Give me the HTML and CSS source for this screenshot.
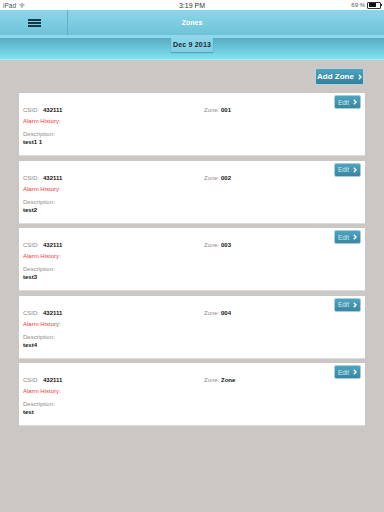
FILE: index.html
```html
<!DOCTYPE html>
<html lang="en">

<head>
    <meta charset="UTF-8">
    <meta name="viewport" content="width=device-width, initial-scale=1">
    <title>Zones</title>
    <link rel="stylesheet" href="styles.css">
</head>

<body>
    <div id="status">
        <div class="status-left">
            <span>iPad</span>
            <svg class="wifi" viewBox="0 0 8 6" width="6" height="5">
                <path d="M0.5 2.2 A5 5 0 0 1 7.5 2.2" fill="none" stroke="#666" stroke-width="0.9"></path>
                <path d="M1.8 3.5 A3.2 3.2 0 0 1 6.2 3.5" fill="none" stroke="#666" stroke-width="0.9"></path>
                <circle cx="4" cy="5" r="0.9" fill="#666"></circle>
            </svg>
        </div>
        <div class="status-time">3:19 PM</div>
        <div class="status-right">
            <span>69 %</span>
            <span class="battery"><span class="battery-level"></span></span>
        </div>
    </div>

    <header id="nav">
        <div class="nav-menu">
            <svg viewBox="0 0 13 8" width="13" height="8">
                <rect x="0" y="0" width="13" height="2" fill="#1d3549"></rect>
                <rect x="0" y="3" width="13" height="2" fill="#1d3549"></rect>
                <rect x="0" y="6" width="13" height="2" fill="#1d3549"></rect>
            </svg>
        </div>
        <div class="nav-title">Zones</div>
        <div></div>
    </header>

    <div id="datebar">
        <div class="date-pill">Dec 9 2013</div>
    </div>

    <main>
        <div class="toolbar">
            <a class="btn btn-add">Add Zone
                <svg viewBox="0 0 4 6" width="4" height="6"><polyline points="0.8,0.8 3,3 0.8,5.2" fill="none" stroke="#fff" stroke-width="1.4"></polyline></svg>
            </a>
        </div>

        <div class="zones">
            <div class="card">
                <div class="card-actions">
                    <a class="btn btn-edit">Edit
                        <svg viewBox="0 0 4 6" width="4" height="6"><polyline points="0.8,0.8 3,3 0.8,5.2" fill="none" stroke="#fff" stroke-width="1.4"></polyline></svg>
                    </a>
                </div>
                <div class="card-main">
                    <div class="field-csid"><span class="label">CSID:</span><span class="value gap">432111</span></div>
                    <div><span class="label">Zone:</span> <span class="value">001</span></div>
                </div>
                <div class="alarm">Alarm History:</div>
                <div class="label desc">Description:</div>
                <div class="value">test1 1</div>
            </div>

            <div class="card">
                <div class="card-actions">
                    <a class="btn btn-edit">Edit
                        <svg viewBox="0 0 4 6" width="4" height="6"><polyline points="0.8,0.8 3,3 0.8,5.2" fill="none" stroke="#fff" stroke-width="1.4"></polyline></svg>
                    </a>
                </div>
                <div class="card-main">
                    <div class="field-csid"><span class="label">CSID:</span><span class="value gap">432111</span></div>
                    <div><span class="label">Zone:</span> <span class="value">002</span></div>
                </div>
                <div class="alarm">Alarm History:</div>
                <div class="label desc">Description:</div>
                <div class="value">test2</div>
            </div>

            <div class="card">
                <div class="card-actions">
                    <a class="btn btn-edit">Edit
                        <svg viewBox="0 0 4 6" width="4" height="6"><polyline points="0.8,0.8 3,3 0.8,5.2" fill="none" stroke="#fff" stroke-width="1.4"></polyline></svg>
                    </a>
                </div>
                <div class="card-main">
                    <div class="field-csid"><span class="label">CSID:</span><span class="value gap">432111</span></div>
                    <div><span class="label">Zone:</span> <span class="value">003</span></div>
                </div>
                <div class="alarm">Alarm History:</div>
                <div class="label desc">Description:</div>
                <div class="value">test3</div>
            </div>

            <div class="card">
                <div class="card-actions">
                    <a class="btn btn-edit">Edit
                        <svg viewBox="0 0 4 6" width="4" height="6"><polyline points="0.8,0.8 3,3 0.8,5.2" fill="none" stroke="#fff" stroke-width="1.4"></polyline></svg>
                    </a>
                </div>
                <div class="card-main">
                    <div class="field-csid"><span class="label">CSID:</span><span class="value gap">432111</span></div>
                    <div><span class="label">Zone:</span> <span class="value">004</span></div>
                </div>
                <div class="alarm">Alarm History:</div>
                <div class="label desc">Description:</div>
                <div class="value">test4</div>
            </div>

            <div class="card">
                <div class="card-actions">
                    <a class="btn btn-edit">Edit
                        <svg viewBox="0 0 4 6" width="4" height="6"><polyline points="0.8,0.8 3,3 0.8,5.2" fill="none" stroke="#fff" stroke-width="1.4"></polyline></svg>
                    </a>
                </div>
                <div class="card-main">
                    <div class="field-csid"><span class="label">CSID:</span><span class="value gap">432111</span></div>
                    <div><span class="label">Zone:</span> <span class="value">Zone</span></div>
                </div>
                <div class="alarm">Alarm History:</div>
                <div class="label desc">Description:</div>
                <div class="value">test</div>
            </div>
        </div>
    </main>
</body>

</html>
```

FILE: styles.css
```css
html,
body {
    margin: 0;
    padding: 0;
    font-family: "Liberation Sans", Arial, sans-serif;
    background-color: #cbc7c5;
    height: 100%;
}

#status {
    height: 10px;
    background-color: #fff;
    display: grid;
    grid-template-columns: 1fr auto 1fr;
    align-items: center;
    font-size: 6.5px;
    color: #555;
    padding: 0 3px;
}

.status-left {
    display: flex;
    align-items: center;
    gap: 3px;
}

.status-time {
    font-size: 7px;
    color: #333;
}

.status-right {
    display: flex;
    align-items: center;
    justify-content: flex-end;
    gap: 2px;
    font-size: 6px;
}

.battery {
    width: 11px;
    height: 4px;
    border: 0.8px solid #333;
    border-radius: 1px;
    position: relative;
    display: flex;
    padding: 0.5px;
}

.battery::after {
    content: "";
    position: absolute;
    right: -2px;
    top: 1px;
    width: 1px;
    height: 2px;
    background: #333;
}

.battery-level {
    width: 70%;
    background-color: #111;
}

#nav {
    height: 25px;
    display: grid;
    grid-template-columns: 68px 1fr 68px;
    background: linear-gradient(#8ad7ea, #6fc2d8);
}

.nav-menu {
    display: flex;
    align-items: center;
    justify-content: center;
    border-right: 1px solid #6aacbf;
    padding-left: 2px;
}

.nav-title {
    display: flex;
    align-items: center;
    justify-content: center;
    color: #fff;
    font-weight: bold;
    font-size: 7px;
}

#datebar {
    height: 21px;
    border-top: 3px solid #8ed8e9;
    border-bottom: 1px solid #a3eef5;
    background: linear-gradient(#58abc3, #7fe3ef);
    display: flex;
    justify-content: center;
}

.date-pill {
    margin-top: -1px;
    height: 15px;
    width: 42px;
    background: linear-gradient(#8cd7e8, #80cfe2);
    box-shadow: 0 1px 1px rgba(40, 100, 120, 0.4);
    display: flex;
    align-items: center;
    justify-content: center;
    font-size: 7px;
    font-weight: bold;
    color: #1b2a30;
    letter-spacing: 0.2px;
}

main {
    padding: 8px 0 0;
}

.toolbar {
    display: flex;
    justify-content: flex-end;
    padding-right: 20px;
}

.btn {
    display: flex;
    align-items: center;
    justify-content: center;
    border-radius: 2px;
    box-sizing: border-box;
}

.btn-add {
    width: 49px;
    height: 17px;
    gap: 4px;
    border: 1px solid #b4d3dc;
    background: linear-gradient(#4ca5bf, #2f809b);
    color: #fff;
    font-weight: bold;
    font-size: 8px;
}

.zones {
    display: flex;
    flex-direction: column;
    gap: 4.5px;
    margin: 8px 19px 0 19px;
}

.card {
    height: 63px;
    box-sizing: border-box;
    background-color: #fff;
    border-bottom: 1px solid #dedad8;
    padding: 2px 4px 0 4px;
    font-size: 6px;
}

.card-actions {
    display: flex;
    justify-content: flex-end;
    margin-bottom: -3px;
}

.btn-edit {
    width: 27px;
    height: 14px;
    gap: 4px;
    border: 1px solid #a9cdd8;
    background: linear-gradient(#4ea4bf, #3886a2);
    color: #d4e9f0;
    font-size: 6.5px;
}

.card-main {
    display: flex;
    line-height: 9px;
}

.field-csid {
    width: 181px;
}

.label {
    color: #8c8c8c;
}

.value {
    color: #111;
    font-weight: bold;
    line-height: 8px;
}

.gap {
    margin-left: 4px;
}

.alarm {
    color: #f03a3a;
    line-height: 9px;
    margin-top: 2px;
}

.desc {
    margin-top: 4px;
    line-height: 8px;
}
```
